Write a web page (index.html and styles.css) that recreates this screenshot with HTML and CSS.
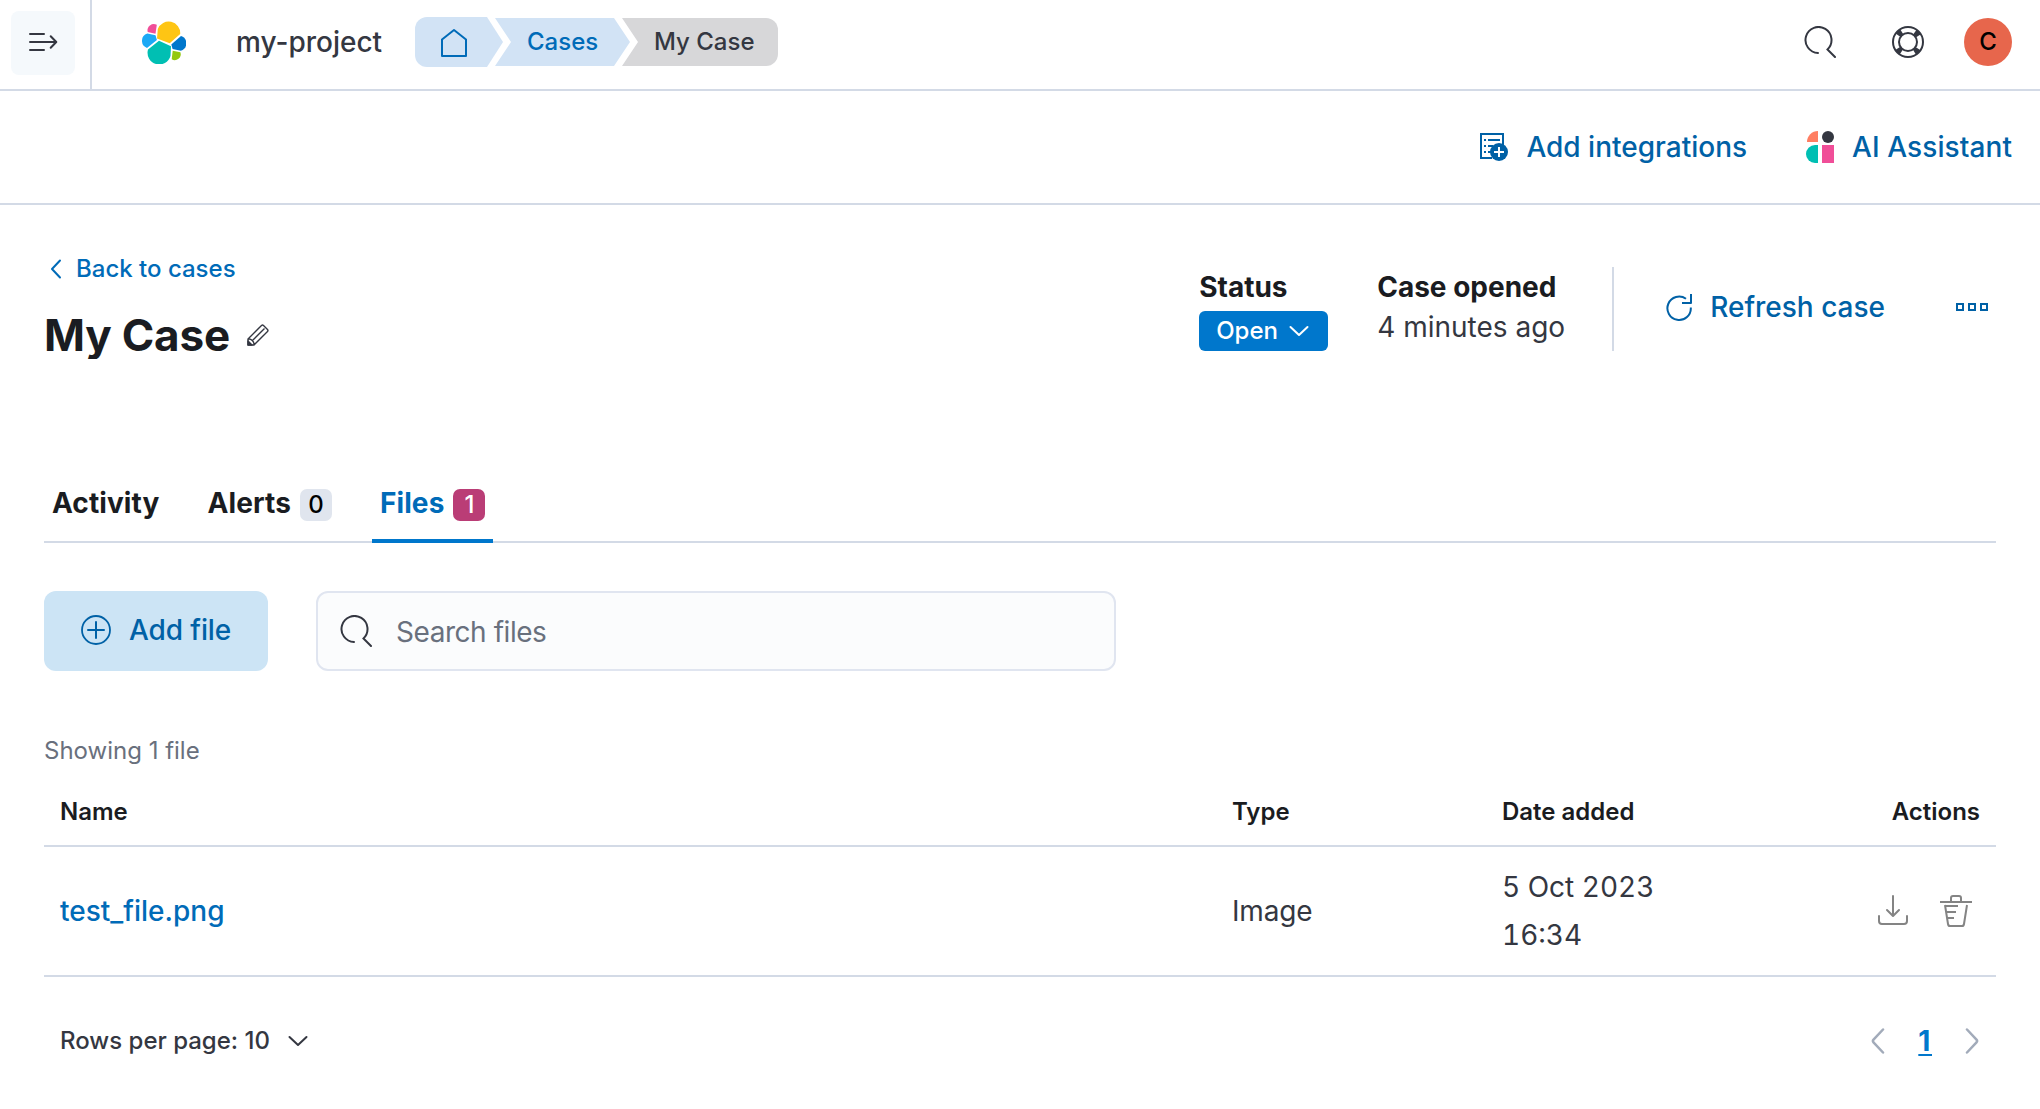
FILE: index.html
```html
<!DOCTYPE html>
<html lang="en">
<head>
<meta charset="utf-8">
<title>My Case - Cases</title>
<link rel="stylesheet" href="styles.css">
</head>
<body>
<header class="header">
  <div class="nav-toggle">
    <button class="nav-toggle-button" aria-label="Expand navigation">
      <svg width="30" height="20" viewBox="0 0 30 20" fill="none" stroke="#343741" stroke-width="2" stroke-linecap="round" stroke-linejoin="round"><path d="M2 2h14M2 10h26M2 18h14M22.700 4.200l5.600 5.800-5.600 5.800"/></svg>
    </button>
  </div>
  <div class="header-main">
    <svg class="logo" width="44" height="44" viewBox="0 0 44 44"><path fill="#fec514" d="M15 18.400l.8-9.400A11.600 11.600 0 0 1 38.200 14l-10.500 9.300Z"/><path fill="#00bfb3" d="M17 20.700l12 5.600-.5 9.700A11.600 11.600 0 0 1 6 29.500Z"/><path fill="#f04e98" d="M14.800 4.800l-1.300 8.900-7.800-1.800A6.300 6.300 0 0 1 14.800 4.800Z"/><path fill="#1ba9f5" d="M5.300 13.600l8.200 1.700 1.400 4.700L5 28A7.600 7.600 0 0 1 5.300 13.600Z"/><path fill="#07c" d="M39 16L29.300 24.500l1.300 4.600 8.200 1.600A7.700 7.700 0 0 0 39 16Z"/><path fill="#93c90e" d="M30.700 30.700l7.700 1.500A6 6 0 0 1 29.700 39.300Z"/></svg>
    <span class="project">my-project</span>
    <nav class="crumbs">
      <a class="crumb crumb-home"><svg width="28" height="30" viewBox="0 0 28 30" fill="none" stroke="#006bb8" stroke-width="2" stroke-linejoin="round"><path d="M2 11.500L14 2l12 9.500V28H2Z"/></svg></a>
      <a class="crumb crumb-link"><span>Cases</span></a>
      <span class="crumb crumb-current"><span>My Case</span></span>
    </nav>
    <div class="header-tools">
      <svg width="32" height="32" viewBox="0 0 32 32" fill="none" stroke="#343741" stroke-width="2" stroke-linecap="round"><path d="M14 27A13 13 0 1 1 23.500 23.400L31 31"/></svg>
      <svg class="help" width="32" height="32" viewBox="0 0 32 32" fill="none" stroke="#343741"><circle cx="16" cy="16" r="12" stroke-width="6" stroke-dasharray="5 13.850" stroke-dashoffset="-6.925"/><circle cx="16" cy="16" r="15" stroke-width="2"/><circle cx="16" cy="16" r="9" stroke-width="2"/></svg>
      <span class="avatar">C</span>
    </div>
  </div>
</header>
<div class="actionbar">
  <a class="action"><svg width="28" height="28" viewBox="0 0 28 28"><path d="M23 13V1H1v24h11" fill="none" stroke="#0061a6" stroke-width="2"/><path d="M4 6h2v2H4ZM8 6h12v2H8ZM4 12h2v2H4ZM8 12h5v2H8ZM4 18h2v2H4ZM8 18h3v2H8Z" fill="#0061a6"/><circle cx="19" cy="19" r="9" fill="#0061a6"/><path d="M19 14v10M14 19h10" stroke="#fff" stroke-width="2"/></svg><span>Add integrations</span></a>
  <a class="action assistant"><svg width="28" height="32" viewBox="0 0 28 32"><path d="M12 0v11H1A11 11 0 0 1 12 0Z" fill="#ff7e62"/><circle cx="22" cy="6" r="6" fill="#343741"/><path d="M12 14v18h-3a9 9 0 0 1 0-18Z" fill="#00bfb3"/><path d="M16 14h12v18H16Z" fill="#f04e98"/></svg><span>AI Assistant</span></a>
</div>
<main class="page">
  <section class="case-head">
    <div class="case-title">
      <a class="back"><svg width="12" height="20" viewBox="0 0 12 20" fill="none" stroke="#006bb8" stroke-width="2" stroke-linecap="round" stroke-linejoin="round"><path d="M10 1.500L2 10l8 8.500"/></svg><span>Back to cases</span></a>
      <div class="title-row"><h1>My Case</h1><svg width="22" height="22" viewBox="0 0 22 22" fill="none" stroke="#343741" stroke-width="1.400" stroke-linejoin="round"><path d="M1 15L14.500 1.500Q15.500.600 16.500 1.500l4 4q.9 1 0 2L7 21H1ZM5.500 16.500L17.500 4.500M1.500 14.800q4.800.7 5.700 5.700"/><path d="M1 17l4 4H1Z" fill="#343741"/></svg></div>
    </div>
    <div class="case-meta">
      <div class="meta"><strong><span>Status</span></strong><button class="status"><span>Open</span><svg width="20" height="12" viewBox="0 0 20 12" fill="none" stroke="#fff" stroke-width="2" stroke-linecap="round" stroke-linejoin="round"><path d="M1.500 2l8.500 8 8.500-8"/></svg></button></div>
      <div class="meta meta-opened"><strong><span>Case opened</span></strong><span class="meta-value">4 minutes ago</span></div>
      <div class="case-actions">
        <a class="refresh"><svg width="26" height="28" viewBox="0 0 26 28" fill="none" stroke="#0061a6" stroke-width="2" stroke-linejoin="round"><path d="M24.800 14.500A11.700 11.700 0 1 1 20 5.800"/><path d="M25 1v9h-9"/></svg><span>Refresh case</span></a>
        <svg class="more" width="32" height="8" viewBox="0 0 32 8" fill="none" stroke="#0061a6" stroke-width="2"><path d="M1 1h6v6H1ZM13 1h6v6h-6ZM25 1h6v6h-6Z"/></svg>
      </div>
    </div>
  </section>
  <nav class="tabs">
    <a class="tab"><span>Activity</span></a>
    <a class="tab"><span>Alerts</span><span class="badge">0</span></a>
    <a class="tab tab-active"><span>Files</span><span class="badge badge-accent">1</span></a>
  </nav>
  <div class="toolbar">
    <button class="add-file"><svg width="30" height="30" viewBox="0 0 30 30" fill="none" stroke="#0061a6" stroke-width="1.800"><circle cx="15" cy="15" r="14"/><path d="M15 7v16M7 15h16" stroke-width="2" stroke-linecap="round"/></svg><span>Add file</span></button>
    <div class="search"><svg width="32" height="32" viewBox="0 0 32 32" fill="none" stroke="#343741" stroke-width="2" stroke-linecap="round"><path d="M14 27A13 13 0 1 1 23.500 23.400L31 31"/></svg><span class="placeholder">Search files</span></div>
  </div>
  <p class="count">Showing 1 file</p>
  <div class="table">
    <div class="row row-head"><span>Name</span><span>Type</span><span>Date added</span><span>Actions</span></div>
    <div class="row row-body">
      <a class="file">test_file.png</a><span class="type">Image</span>
      <div class="date">5 Oct 2023<br>16:34</div>
      <div class="row-icons">
        <svg width="32" height="32" viewBox="0 0 32 32" fill="none" stroke="#848484" stroke-width="2" stroke-linecap="round" stroke-linejoin="round"><path d="M17 1v19.500M11 15l6 6 6-6M3 21v5q0 3 3 3h22q3 0 3-3v-5"/></svg>
        <svg width="32" height="32" viewBox="0 0 32 32" fill="none" stroke="#848484" stroke-width="2" stroke-linejoin="round"><path d="M0 7h32M11 7V3q0-2 2-2h6q2 0 2 2v4M5 10l3 19q.3 2 2 2h12q1.700 0 2-2l3-19M5 11h13M6 17h10M7 23h7"/></svg>
      </div>
    </div>
  </div>
  <footer class="pager">
    <a class="rows"><span>Rows per page: 10</span><svg width="20" height="12" viewBox="0 0 20 12" fill="none" stroke="#343741" stroke-width="2" stroke-linecap="round" stroke-linejoin="round"><path d="M1.500 2l8.500 8 8.500-8"/></svg></a>
    <div class="pages">
      <svg width="14" height="26" viewBox="0 0 14 26" fill="none" stroke="#a2abba" stroke-width="2.500" stroke-linecap="round" stroke-linejoin="round"><path d="M12 1.500L2.500 11.700q-1.200 1.300 0 2.600L12 24.500"/></svg>
      <span class="page-number">1</span>
      <svg width="14" height="26" viewBox="0 0 14 26" fill="none" stroke="#a2abba" stroke-width="2.500" stroke-linecap="round" stroke-linejoin="round"><path d="M2 1.500l9.500 10.200q1.200 1.300 0 2.600L2 24.500"/></svg>
    </div>
  </footer>
</main>
</body>
</html>
```
FILE: styles.css
```css
* { box-sizing: border-box; }
body { margin: 0; background: #fff; color: #343741; font: 400 28px/40px Inter, "Liberation Sans", sans-serif; }
svg { display: block; flex: none; }
button { border: 0; padding: 0; font: inherit; color: inherit; }
h1, p { margin: 0; }

.header { display: flex; height: 91px; border-bottom: 2px solid #d3dae6; }
.nav-toggle { width: 92px; padding: 11px; border-right: 2px solid #d3dae6; }
.nav-toggle-button { display: flex; align-items: center; justify-content: center; width: 64px; height: 64px; padding-bottom: 2px; border-radius: 8px; background: #f5f9fc; }
.header-main { flex: 1; display: flex; align-items: center; height: 84px; padding: 0 28px 0 50px; }
.project { margin-left: 50px; width: 179px; font-weight: 500; }
.crumbs { display: flex; align-items: center; font-size: 24px; font-weight: 500; }
.crumb { display: flex; align-items: center; height: 48px; background: #d2e3f5; }
.crumb-home { width: 88px; height: 50px; padding: 2px 0 0 25px; border-radius: 12px 0 0 12px; clip-path: polygon(0 0, 72px 0, 100% 50%, 72px 100%, 0 100%); }
.crumb-link { width: 135px; margin-left: -8px; padding-left: 32px; color: #006bb8; clip-path: polygon(0 0, 119px 0, 100% 50%, 119px 100%, 0 100%, 16px 50%); }
.crumb-current { width: 156px; margin-left: -8px; padding-left: 32px; background: #d7d7d9; border-radius: 0 12px 12px 0; clip-path: polygon(0 0, 100% 0, 100% 100%, 0 100%, 16px 50%); }
.header-tools { display: flex; align-items: center; margin-left: auto; }
.help { margin: 0 40px 0 56px; }
.avatar { width: 48px; height: 48px; border-radius: 50%; background: #e7664c; color: #000; font-size: 24px; font-weight: 500; line-height: 48px; text-align: center; }

.actionbar { display: flex; justify-content: flex-end; align-items: center; gap: 59px; height: 114px; padding-right: 28px; border-bottom: 2px solid #d3dae6; color: #0061a6; font-weight: 500; }
.action { display: flex; align-items: center; gap: 18px; }
.assistant { letter-spacing: 0.08px; }

.page { padding: 50px 44px 0; }
.case-head { display: flex; justify-content: space-between; height: 234px; }
.back { display: flex; align-items: center; gap: 14px; height: 28px; padding-left: 6px; color: #006bb8; font-size: 24px; font-weight: 500; line-height: 28px; }
.title-row { display: flex; align-items: center; gap: 17px; margin-top: 28px; }
h1 { height: 48px; overflow: hidden; color: #1a1c21; font-size: 44px; font-weight: 700; line-height: 48px; letter-spacing: -0.2px; }
.case-meta { display: flex; padding-top: 12px; }
.meta { width: 178px; }
.meta strong { display: block; color: #1a1c21; font-weight: 700; }
.meta-opened { width: 235px; }
.meta-value { display: block; }
.status { display: flex; align-items: center; gap: 11px; width: 129px; height: 40px; margin-top: 4px; padding-left: 17px; border-radius: 6px; background: #07c; color: #fff; font-size: 24px; font-weight: 500; }
.case-actions { display: flex; align-items: center; height: 84px; padding: 0 8px 4px 52px; border-left: 2px solid #d3dae6; color: #0061a6; font-weight: 500; }
.refresh { display: flex; align-items: center; gap: 18px; }
.more { margin-left: 71px; }

.tabs { display: flex; gap: 32px; height: 54px; border-bottom: 2px solid #d3dae6; color: #1a1c21; font-weight: 700; letter-spacing: 0.1px; }
.tab { display: flex; height: 54px; padding: 0 8px 14px; line-height: 28px; }
.tab-active { color: #006bb8; border-bottom: 4px solid #07c; }
.badge { width: 32px; height: 32px; margin-left: 9px; border-radius: 7px; background: #e0e5ee; color: #000; font-size: 24px; font-weight: 500; line-height: 32px; text-align: center; }
.badge-accent { background: #ba3d76; color: #fff; }

.toolbar { display: flex; gap: 48px; margin-top: 48px; }
.add-file { display: flex; align-items: center; gap: 18px; width: 224px; height: 80px; padding: 0 0 2px 37px; border-radius: 12px; background: #cce4f5; color: #0061a6; font-weight: 500; letter-spacing: -0.1px; }
.search { display: flex; align-items: center; gap: 24px; width: 800px; height: 80px; padding-left: 22px; border: 2px solid #e0e5f0; border-radius: 12px; background: #fbfcfd; color: #69707d; }
.placeholder { padding-top: 2px; letter-spacing: -0.45px; }
.count { margin-top: 60px; color: #69707d; font-size: 24px; }

.row { display: grid; grid-template-columns: 1172px 270px 1fr auto; align-items: center; padding: 0 16px; border-bottom: 2px solid #d3dae6; }
.row-head { height: 76px; padding-top: 8px; color: #1a1c21; font-size: 24px; font-weight: 600; }
.row-body { height: 130px; }
.file { color: #006bb8; font-weight: 500; }
.type { letter-spacing: -0.2px; }
.date { line-height: 48px; font-variant-numeric: tabular-nums; }
.row-icons { display: flex; gap: 32px; margin-right: 8px; }

.pager { display: flex; justify-content: space-between; align-items: center; height: 128px; padding: 0 17px 0 16px; }
.rows { display: flex; align-items: center; gap: 18px; font-size: 24px; font-weight: 500; }
.pages { display: flex; align-items: center; gap: 33px; }
.page-number { color: #07c; font-weight: 700; letter-spacing: 1.6px; text-decoration: underline 2px; text-underline-offset: 3px; }
```
